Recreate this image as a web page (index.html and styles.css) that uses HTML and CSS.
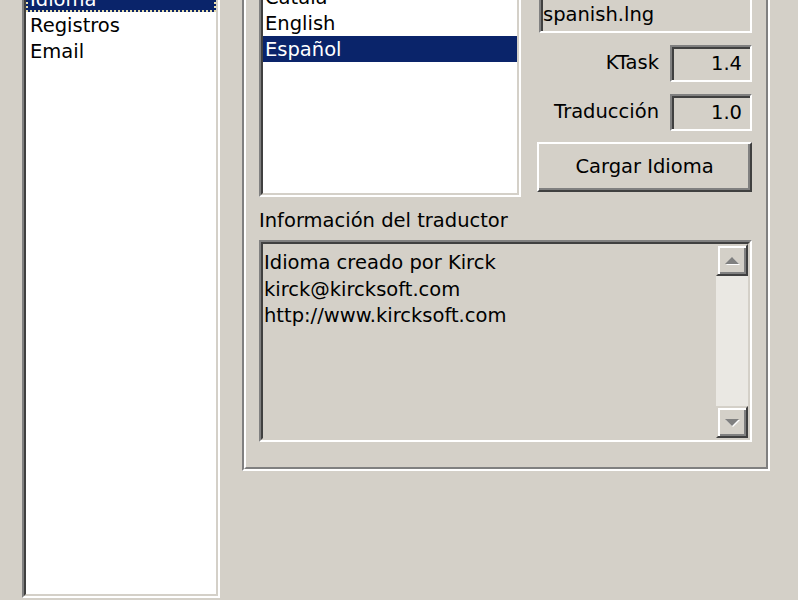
FILE: index.html
```html
<!DOCTYPE html>
<html>
<head>
<meta charset="utf-8">
<link rel="stylesheet" href="styles.css">
</head>
<body>
<div class="dialog">
  <div class="sunken nav">
    <div class="sunken-in list nav-list">
      <div class="item sel focus">Idioma</div>
      <div class="item">Registros</div>
      <div class="item">Email</div>
    </div>
  </div>
  <div class="group">
    <div class="group-inner">
      <div class="top-row">
        <div class="sunken langs">
          <div class="sunken-in list lang-list">
            <div class="item">Català</div>
            <div class="item">English</div>
            <div class="item sel">Español</div>
          </div>
        </div>
        <div class="side">
          <div class="field file">spanish.lng</div>
          <div class="row"><span class="lbl">KTask</span><div class="field num">1.4</div></div>
          <div class="row"><span class="lbl">Traducción</span><div class="field num">1.0</div></div>
          <button class="btn">Cargar Idioma</button>
        </div>
      </div>
      <div class="caption">Información del traductor</div>
      <div class="sunken memo">
        <div class="sunken-in memo-in">
          <div class="memo-text">Idioma creado por Kirck<br>kirck@kircksoft.com<br>http://www.kircksoft.com</div>
          <div class="scrollbar">
            <div class="sbtn"><svg width="16" height="9" viewBox="0 0 16 9"><polygon points="9,2 16,9 2,9" fill="#ffffff"/><polygon points="8,1 15,8 1,8" fill="#808080"/></svg></div>
            <div class="track"></div>
            <div class="sbtn"><svg width="16" height="9" viewBox="0 0 16 9"><polygon points="2,2 16,2 9,9" fill="#ffffff"/><polygon points="1,1 15,1 8,8" fill="#808080"/></svg></div>
          </div>
        </div>
      </div>
    </div>
  </div>
</div>
</body>
</html>
```

FILE: styles.css
```css
html, body {
  margin: 0;
  padding: 0;
}
body {
  background: #d4d0c8;
  font-family: "DejaVu Sans", "Noto Sans", sans-serif;
  font-size: 19.5px;
  color: #000;
  width: 798px;
  height: 600px;
  overflow: hidden;
}
.dialog {
  display: flex;
  align-items: flex-start;
  gap: 22px;
  padding-left: 22px;
  margin-top: -60px;
}

/* sunken 3D frames */
.sunken {
  box-sizing: border-box;
  border: 2px solid;
  border-color: #808080 #ffffff #ffffff #808080;
}
.sunken-in {
  box-sizing: border-box;
  height: 100%;
  border: 2px solid;
  border-color: #404040 #d4d0c8 #d4d0c8 #404040;
}
.list {
  background: #ffffff;
}
.item {
  box-sizing: border-box;
  height: 26px;
  line-height: 26px;
  white-space: nowrap;
}
.sel {
  background: #0a246a;
  color: #ffffff;
}
.focus {
  outline: 2px dotted #e9dfae;
  outline-offset: -2px;
}

/* left navigation list */
.nav {
  width: 198px;
  height: 638px;
  margin-top: 20px;
}
.nav-list {
  padding-top: 22px;
}
.nav-list .item {
  padding: 2px 0 0 4px;
  line-height: 24px;
}

/* group box */
.group {
  box-sizing: border-box;
  width: 528px;
  height: 531px;
  border: 2px solid;
  border-color: #808080 #ffffff #ffffff #808080;
}
.group-inner {
  box-sizing: border-box;
  height: 100%;
  border: 2px solid;
  border-color: #ffffff #808080 #808080 #ffffff;
  padding: 16px 14px 25px 13px;
  display: flex;
  flex-direction: column;
}
.top-row {
  display: flex;
  gap: 16px;
}
.langs {
  width: 262px;
  height: 237px;
}
.lang-list {
  padding-top: 20px;
}
.lang-list .item {
  padding: 1px 0 0 2px;
  line-height: 25px;
}

.side {
  width: 215px;
  display: flex;
  flex-direction: column;
}
.field {
  box-sizing: border-box;
  height: 37px;
  line-height: 33px;
  border: 2px solid;
  border-color: #808080 #ffffff #ffffff #808080;
  box-shadow: inset 2px 2px 0 #404040;
  background: #d4d0c8;
  white-space: nowrap;
}
.file {
  margin-top: 36px;
  margin-left: 2px;
  padding-left: 2px;
}
.row {
  margin-top: 12px;
  display: flex;
  justify-content: flex-end;
  align-items: center;
  gap: 11px;
}
.lbl {
  line-height: 24px;
  margin-top: -2px;
}
.num {
  width: 82px;
  text-align: right;
  padding-right: 8px;
}
.btn {
  margin-top: 11px;
  box-sizing: border-box;
  width: 215px;
  height: 50px;
  font: inherit;
  color: #000;
  background: #d4d0c8;
  border: 2px solid;
  border-color: #ffffff #404040 #404040 #ffffff;
  box-shadow: inset -2px -2px 0 #808080;
  padding: 0 0 2px 0;
}

.caption {
  margin-top: 12px;
  line-height: 24px;
  height: 24px;
}
.memo {
  margin-top: 7px;
  width: 493px;
  height: 202px;
}
.memo-in {
  display: flex;
  background: #d4d0c8;
}
.memo-text {
  flex: 1;
  padding: 6px 0 0 1px;
  line-height: 26.5px;
}
.scrollbar {
  width: 32px;
  display: flex;
  flex-direction: column;
}
.sbtn {
  box-sizing: border-box;
  width: 32px;
  height: 32px;
  border: 2px solid;
  border-color: #d4d0c8 #404040 #404040 #d4d0c8;
  box-shadow: inset 2px 2px 0 #ffffff, inset -2px -2px 0 #808080;
  background: #d4d0c8;
  display: flex;
  align-items: center;
  justify-content: center;
}
.track {
  flex: 1;
  background: #eae8e3;
}
```
